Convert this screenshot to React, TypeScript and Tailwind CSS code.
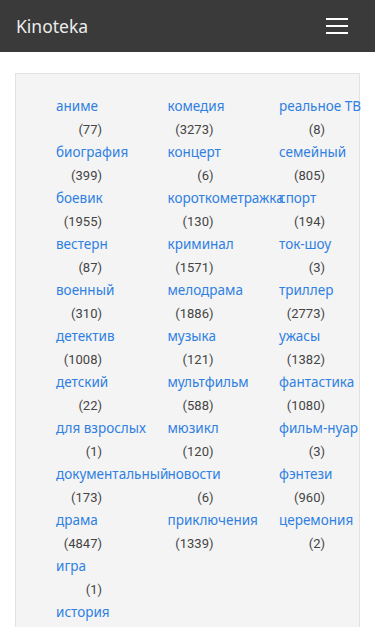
import React from "react";

type Genre = { name: string; count: number };

const columns: Genre[][] = [
    [
        { name: "аниме", count: 77 },
        { name: "биография", count: 399 },
        { name: "боевик", count: 1955 },
        { name: "вестерн", count: 87 },
        { name: "военный", count: 310 },
        { name: "детектив", count: 1008 },
        { name: "детский", count: 22 },
        { name: "для взрослых", count: 1 },
        { name: "документальный", count: 173 },
        { name: "драма", count: 4847 },
        { name: "игра", count: 1 },
        { name: "история", count: 430 },
    ],
    [
        { name: "комедия", count: 3273 },
        { name: "концерт", count: 6 },
        { name: "короткометражка", count: 130 },
        { name: "криминал", count: 1571 },
        { name: "мелодрама", count: 1886 },
        { name: "музыка", count: 121 },
        { name: "мультфильм", count: 588 },
        { name: "мюзикл", count: 120 },
        { name: "новости", count: 6 },
        { name: "приключения", count: 1339 },
    ],
    [
        { name: "реальное ТВ", count: 8 },
        { name: "семейный", count: 805 },
        { name: "спорт", count: 194 },
        { name: "ток-шоу", count: 3 },
        { name: "триллер", count: 2773 },
        { name: "ужасы", count: 1382 },
        { name: "фантастика", count: 1080 },
        { name: "фильм-нуар", count: 3 },
        { name: "фэнтези", count: 960 },
        { name: "церемония", count: 2 },
    ],
];

function GenreItem({ genre }: { genre: Genre }) {
    return (
        <li className="flex flex-col">
            <a href="#" className="block h-[22px] leading-[20px] whitespace-nowrap text-[13.5px] text-[#2f80e3]">
                {genre.name}
            </a>
            <span className="block w-[46px] h-[24px] leading-[24px] text-right text-[13px] text-[#444] font-['Liberation_Sans_Narrow','Roboto',sans-serif]">
                ({genre.count})
            </span>
        </li>
    );
}

export default function App() {
    return (
        <div className="h-[627px] bg-white font-['Noto_Sans','Open_Sans',sans-serif] overflow-hidden">
            <nav className="h-[52px] bg-[#3a3a3a] flex items-center justify-between pl-4 pr-[27px]">
                <span className="text-[17.5px] text-[#ececec]">Kinoteka</span>
                <button className="flex flex-col gap-[5px] w-[22px]">
                    <span className="block h-[2px] bg-white" />
                    <span className="block h-[2px] bg-white" />
                    <span className="block h-[2px] bg-white" />
                </button>
            </nav>
            <div className="mx-[15px] mt-[21px] bg-[#f4f4f4] border border-[#e2e2e2] pt-[22px] pb-5 pl-10 w-[345px]">
                <div className="flex">
                    {columns.map((col, i) => (
                        <ul key={i} className="w-[111.5px] shrink-0">
                            {col.map((g) => (
                                <GenreItem key={g.name} genre={g} />
                            ))}
                        </ul>
                    ))}
                </div>
            </div>
        </div>
    );
}
